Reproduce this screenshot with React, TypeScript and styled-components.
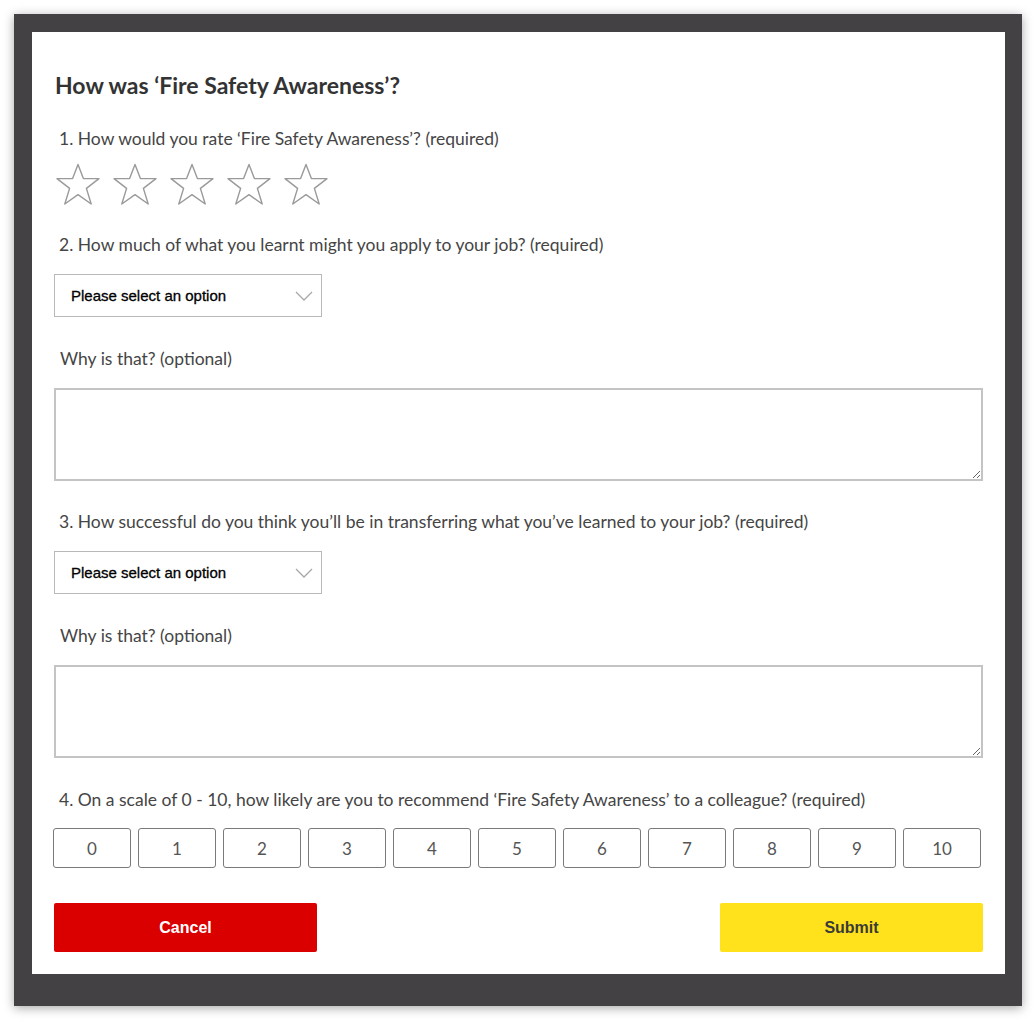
import styled, { createGlobalStyle } from "styled-components";

const GlobalStyle = createGlobalStyle`
  html, body {
    margin: 0;
    padding: 0;
    background: #ffffff;
  }
  * { box-sizing: border-box; }
`;

const Star = () => (
  <svg width="46" height="43" viewBox="0 0 46 43">
    <polygon
      points="23,1.5 28.4,15.6 44,15.6 31.4,25.4 36.2,41 23,31.6 9.8,41 14.6,25.4 2,15.6 17.6,15.6"
      fill="none"
      stroke="#9a9a9a"
      strokeWidth="1.4"
      strokeLinejoin="round"
    />
  </svg>
);

const Chevron = () => (
  <svg width="18" height="10" viewBox="0 0 18 10">
    <polyline points="1,1 9,9 17,1" fill="none" stroke="#a8a8a8" strokeWidth="1.3" />
  </svg>
);

const OptionSelect = () => (
  <SelectBox>
    <SelectText>Please select an option</SelectText>
    <Chevron />
  </SelectBox>
);

const scale = Array.from({ length: 11 }, (_, i) => i);

const App = () => {
  return (
    <>
      <GlobalStyle />
      <Page>
        <Frame>
          <Panel>
            <Title>How was ‘Fire Safety Awareness’?</Title>

            <Question $top={31}>1. How would you rate ‘Fire Safety Awareness’? (required)</Question>
            <Stars>
              {[0, 1, 2, 3, 4].map((i) => (
                <StarBtn key={i}>
                  <Star />
                </StarBtn>
              ))}
            </Stars>

            <Question $top={29}>2. How much of what you learnt might you apply to your job? (required)</Question>
            <OptionSelect />
            <SubLabel>Why is that? (optional)</SubLabel>
            <Comment />

            <Question $top={31}>
              3. How successful do you think you’ll be in transferring what you’ve learned to your job? (required)
            </Question>
            <OptionSelect />
            <SubLabel>Why is that? (optional)</SubLabel>
            <Comment />

            <Question $top={32}>
              4. On a scale of 0 - 10, how likely are you to recommend ‘Fire Safety Awareness’ to a colleague? (required)
            </Question>
            <Scale>
              {scale.map((n) => (
                <ScaleBtn key={n}>{n}</ScaleBtn>
              ))}
            </Scale>

            <Actions>
              <ActionBtn $variant="cancel">Cancel</ActionBtn>
              <ActionBtn $variant="submit">Submit</ActionBtn>
            </Actions>
          </Panel>
        </Frame>
      </Page>
    </>
  );
};

const Page = styled.div`
  width: 1036px;
  height: 1020px;
  padding: 14px;
  background: #ffffff;
`;

const Frame = styled.div`
  width: 1008px;
  height: 992px;
  background: #434144;
  padding: 18px 17px 32px 18px;
  box-shadow: 0 2px 10px rgba(0, 0, 0, 0.35);
`;

const Panel = styled.div`
  width: 973px;
  height: 942px;
  background: #ffffff;
  padding: 40px 22px 0 22px;
  display: flex;
  flex-direction: column;
  font-family: Lato, "Open Sans", sans-serif;
`;

const Title = styled.h1`
  margin: 0 0 0 1px;
  font-size: 23px;
  line-height: 26px;
  font-weight: 700;
  color: #333333;
`;

const Question = styled.div<{ $top: number }>`
  margin: ${(p) => p.$top}px 0 0 5px;
  font-size: 17.5px;
  line-height: 20px;
  color: #454545;
  white-space: nowrap;
`;

const Stars = styled.div`
  display: flex;
  gap: 11px;
  margin: 14px 0 0 1px;
`;

const StarBtn = styled.span`
  display: block;
  width: 46px;
  height: 43px;
  cursor: pointer;
`;

const SelectBox = styled.div`
  width: 268px;
  height: 43px;
  margin-top: 19px;
  border: 1px solid #b9b9b9;
  display: flex;
  align-items: center;
  justify-content: space-between;
  padding: 0 8px 0 16px;
  cursor: pointer;
`;

const SelectText = styled.span`
  font-family: "Liberation Sans", Arial, sans-serif;
  font-size: 15px;
  color: #000000;
  -webkit-text-stroke: 0.3px #000000;
`;

const SubLabel = styled.div`
  margin: 32px 0 0 6px;
  font-size: 17.5px;
  line-height: 20px;
  color: #454545;
`;

const Comment = styled.textarea`
  display: block;
  width: 929px;
  height: 93px;
  margin-top: 19px;
  border: 2px solid #c4c4c4;
  border-radius: 0;
  resize: vertical;
  background: #ffffff;
  font-family: Lato, sans-serif;
  font-size: 15px;
  outline: none;
`;

const Scale = styled.div`
  display: grid;
  grid-template-columns: repeat(11, 78px);
  gap: 7px;
  margin: 18px 0 0 -1px;
`;

const ScaleBtn = styled.button`
  height: 40px;
  background: #ffffff;
  border: 1.5px solid #7a7a7a;
  border-radius: 3px;
  font-family: Lato, sans-serif;
  font-size: 17px;
  color: #555555;
  padding: 0;
  cursor: pointer;
`;

const Actions = styled.div`
  display: flex;
  justify-content: space-between;
  margin-top: 35px;
`;

const ActionBtn = styled.button<{ $variant: "cancel" | "submit" }>`
  width: 263px;
  height: 49px;
  border: none;
  border-radius: 2px;
  background: ${(p) => (p.$variant === "cancel" ? "#db0000" : "#ffe21b")};
  color: ${(p) => (p.$variant === "cancel" ? "#ffffff" : "#3a3a3a")};
  font-family: "Liberation Sans", Arial, sans-serif;
  font-size: 16px;
  font-weight: 700;
  cursor: pointer;
`;

export default App;
